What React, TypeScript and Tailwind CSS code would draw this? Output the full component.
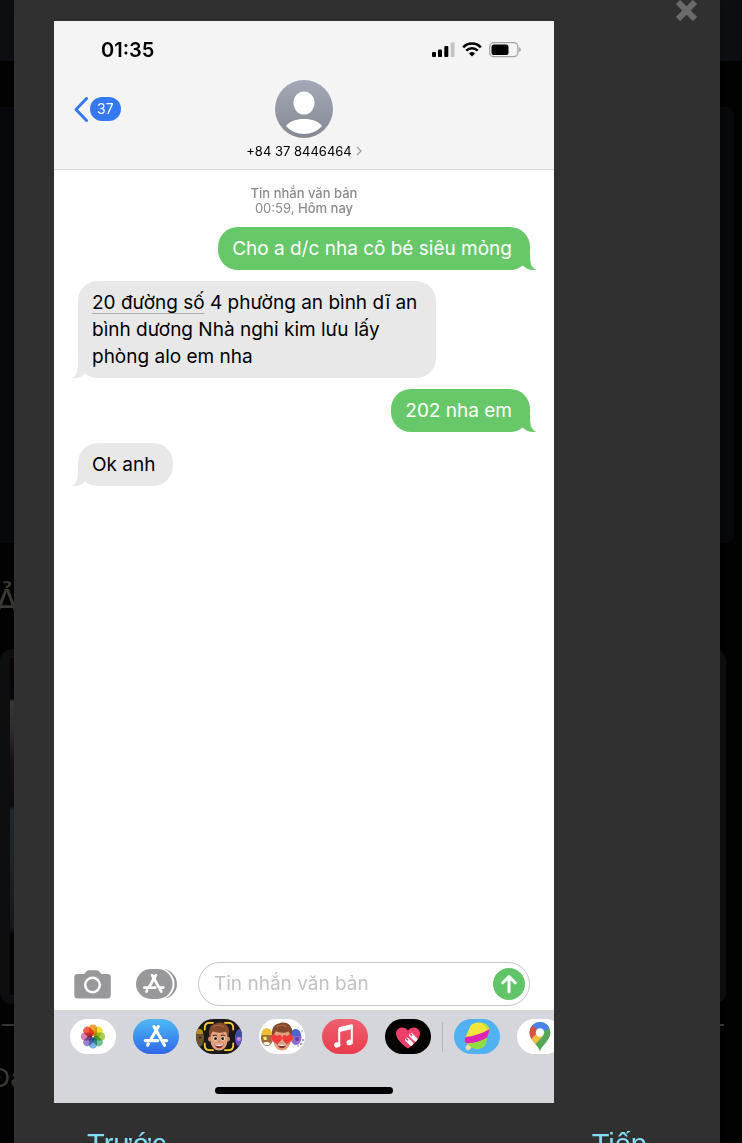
import React from "react";

type Message = {
  id: number;
  mine: boolean;
  link?: string;
  text: string;
};

const messages: Message[] = [
  { id: 1, mine: true, text: "Cho a d/c nha cô bé siêu mỏng" },
  {
    id: 2,
    mine: false,
    link: "20 đường số",
    text: " 4 phường an bình dĩ an bình dương Nhà nghỉ kim lưu lấy phòng alo em nha",
  },
  { id: 3, mine: true, text: "202 nha em" },
  { id: 4, mine: false, text: "Ok anh" },
];

const SignalIcon = () => (
  <svg width="23" height="15" viewBox="0 0 23 15">
    <rect x="0" y="10" width="4" height="5" rx="1" fill="#000" />
    <rect x="6" y="7.5" width="4" height="7.5" rx="1" fill="#000" />
    <rect x="12.3" y="4" width="4" height="11" rx="1" fill="#000" />
    <rect x="18.6" y="0.5" width="4" height="14.5" rx="1" fill="#c4c4c4" />
  </svg>
);

const WifiIcon = () => (
  <svg width="20" height="15" viewBox="0 0 20 15" fill="none" stroke="#000">
    <path d="M1.2 5.3C6 0.3 14 0.3 18.8 5.3" strokeWidth="2.6" />
    <path d="M4.3 8.7C7.5 5.5 12.5 5.5 15.7 8.7" strokeWidth="2.5" />
    <path d="M7 11.4a4.3 4.3 0 0 1 6 0L10 14.6z" fill="#000" stroke="none" />
  </svg>
);

const BatteryIcon = () => (
  <svg width="33" height="16" viewBox="0 0 33 16">
    <rect x="0.7" y="0.7" width="28.2" height="14" rx="4.2" fill="none" stroke="#a3a3a3" strokeWidth="1.3" />
    <rect x="2.5" y="2.5" width="17" height="10.5" rx="2.5" fill="#000" />
    <path d="M30.2 5.3c2.2 0.8 2.2 4 0 4.8z" fill="#a3a3a3" />
  </svg>
);

const AvatarIcon = () => (
  <svg width="58" height="58" viewBox="0 0 58 58">
    <defs>
      <linearGradient id="avatar" x1="0" y1="0" x2="0" y2="1">
        <stop offset="0" stopColor="#a5a9b7" />
        <stop offset="1" stopColor="#858994" />
      </linearGradient>
    </defs>
    <circle cx="29" cy="29" r="29" fill="url(#avatar)" />
    <ellipse cx="29" cy="23" rx="10.5" ry="11.5" fill="#fff" />
    <path d="M11 46C17 36.5 41 36.5 47 46C38 56.5 20 56.5 11 46z" fill="#fff" />
  </svg>
);

const CameraIcon = () => (
  <svg width="37" height="29" viewBox="0 0 37 29">
    <path
      d="M3.5 4H10L12.5 1.3Q13.5 0.3 15 0.3H22.5Q24 0.3 25 1.3L27.5 4H33.5Q36.8 4 36.8 7V25Q36.8 28.5 33.5 28.5H3.5Q0.3 28.5 0.3 25V7Q0.3 4 3.5 4z"
      fill="#98989a"
    />
    <circle cx="18.5" cy="15" r="7.3" fill="none" stroke="#fff" strokeWidth="2.4" />
  </svg>
);

const AppStoreGlyph = () => (
  <g fill="none" stroke="#fff" strokeWidth="3.1" strokeLinecap="round">
    <path d="M10.3 1.6L12.3 5L20.8 20.3" />
    <path d="M14.6 1.6L6.6 15.6" />
    <path d="M4.6 18.8L3.9 20.2" />
    <path d="M1.6 15.6H14" />
    <path d="M19 15.6H23" />
  </g>
);

const AppsIcon = () => (
  <svg width="42" height="30" viewBox="0 0 42 30">
    <rect x="8" y="0" width="33" height="30" rx="15" fill="#98989a" />
    <rect x="4" y="-1" width="34.5" height="32" rx="16" fill="#fff" />
    <rect x="0" y="0" width="36.5" height="30" rx="15" fill="#98989a" />
    <g transform="translate(7 4.8) scale(0.88)">
      <AppStoreGlyph />
    </g>
  </svg>
);

const SendIcon = () => (
  <svg width="32" height="32" viewBox="0 0 32 32">
    <circle cx="16" cy="16" r="16" fill="#61c466" />
    <path
      d="M16 24V9M9.8 14.8L16 8.6L22.2 14.8"
      fill="none"
      stroke="#fff"
      strokeWidth="3"
      strokeLinecap="round"
      strokeLinejoin="round"
    />
  </svg>
);

const petals = [
  { angle: 0, color: "#f5a133" },
  { angle: 45, color: "#ebe03c" },
  { angle: 90, color: "#a8cf50" },
  { angle: 135, color: "#6fc096" },
  { angle: 180, color: "#78b4e6" },
  { angle: 225, color: "#9a83cc" },
  { angle: 270, color: "#d387b4" },
  { angle: 315, color: "#f0604e" },
];

const PhotosIcon = () => (
  <svg width="46" height="35" viewBox="0 0 46 35">
    {petals.map((petal) => (
      <rect
        key={petal.angle}
        x="19"
        y="5.4"
        width="8"
        height="11.4"
        rx="4"
        fill={petal.color}
        className="mix-blend-multiply"
        transform={`rotate(${petal.angle} 23 17.5)`}
      />
    ))}
  </svg>
);

const StoreIcon = () => (
  <svg width="46" height="35" viewBox="0 0 46 35">
    <g transform="translate(10.7 6)">
      <AppStoreGlyph />
    </g>
  </svg>
);

const BoyFace = ({ hearts = false }: { hearts?: boolean }) => (
  <g>
    <ellipse cx="13.8" cy="20" rx="1.8" ry="2.6" fill="#c98762" />
    <ellipse cx="32.2" cy="20" rx="1.8" ry="2.6" fill="#c98762" />
    <path d="M14.5 13Q23 8 31.5 13V21C31.5 27 28 31.5 23 31.5S14.5 27 14.5 21z" fill="#e0a17c" />
    <path
      d="M13.5 18C12 11 14 5.5 20 4.5C23 2.5 30 3.5 32 8C34 11 33 15 32.3 18C31 16 30.5 13.5 29.5 12.5C25 14.5 20 13.5 17 12.3C15.5 14 14.8 16 13.5 18z"
      fill="#82492c"
    />
    <path d="M17 8.5C20 5.5 25 5.5 28 8" fill="none" stroke="#a9653f" strokeWidth="1.3" />
    {hearts ? (
      <g fill="#f03b3b">
        <path d="M18 25C12.5 22.3 11 18.5 13 16.3C15 14.6 17.3 15.6 18.3 17.3C19.5 15.2 22.5 15.5 23 18C23.2 21 20.5 23.5 18 25z" />
        <path d="M28.3 25C25.5 23.5 23 21 23.3 18C23.8 15.5 26.7 15.2 27.8 17.3C28.9 15.6 31.3 14.6 33.2 16.3C35 18.5 33.5 22.3 28.3 25z" />
      </g>
    ) : (
      <g>
        <path d="M17 16.8Q19 15.5 21 16.8M25 16.8Q27 15.5 29 16.8" fill="none" stroke="#6b3a22" strokeWidth="1.1" />
        <circle cx="19.3" cy="19.5" r="1.9" fill="#fff" />
        <circle cx="26.9" cy="19.5" r="1.9" fill="#fff" />
        <circle cx="19.5" cy="19.5" r="1.5" fill="#33211a" />
        <circle cx="26.7" cy="19.5" r="1.5" fill="#33211a" />
        <path d="M22 22.2Q23 23 24 22.2" fill="none" stroke="#b8704e" strokeWidth="1" />
      </g>
    )}
    <path d="M18.3 24.8Q23 26 27.7 24.8Q26.5 29.3 23 29.3T18.3 24.8z" fill="#8c2f2b" />
    <path d="M18.9 24.9Q23 26 27.1 24.9L26.5 26.6Q23 27.3 19.5 26.6z" fill="#fff" />
  </g>
);

const MemojiIcon = () => (
  <svg width="46" height="35" viewBox="0 0 46 35">
    <ellipse cx="3" cy="19" rx="5" ry="9" fill="#6e5230" />
    <path d="M-1 13Q3 7 7 12L7 15H-1z" fill="#b98b20" />
    <circle cx="4" cy="18.5" r="1" fill="#221a12" />
    <ellipse cx="44" cy="19" rx="5" ry="9" fill="#6a55c8" />
    <path d="M40 14Q44 8 48 14V18H40z" fill="#3d50a8" />
    <circle cx="43" cy="20" r="2" fill="#c48bd8" />
    <BoyFace />
    <g fill="none" stroke="#fbd034" strokeWidth="1.8" strokeLinecap="round">
      <path d="M8.8 10.5V8.5Q8.8 3.8 13.5 3.8H17" />
      <path d="M29 3.8H32.5Q37.2 3.8 37.2 8.5V10.5" />
      <path d="M8.8 24.5V26.5Q8.8 31.2 13.5 31.2H17" />
      <path d="M29 31.2H32.5Q37.2 31.2 37.2 26.5V24.5" />
    </g>
  </svg>
);

const StickersIcon = () => (
  <svg width="46" height="35" viewBox="0 0 46 35">
    <ellipse cx="8" cy="19" rx="6" ry="8" fill="#a06c38" />
    <path d="M2.5 16C2 11 6 8.5 9 9.5C12 10 13.5 13 13 16z" fill="#efbd35" />
    <path d="M4 18.5L6 17.5L8 18.5L7.5 21H5z" fill="#ffe56b" />
    <path d="M4 24Q8 22 11 24L10 26H6z" fill="#fff" />
    <ellipse cx="37" cy="18.5" rx="5.5" ry="7.5" fill="#8f6bd0" />
    <path d="M32 14C33 9 40 8.5 41.5 14L42 17H33z" fill="#4a68cc" />
    <circle cx="38" cy="20" r="2" fill="#6a3aa0" />
    <g fill="#7b6ae6">
      <circle cx="43" cy="12" r="0.7" />
      <circle cx="44" cy="21" r="0.9" />
      <circle cx="42" cy="25" r="1" />
      <circle cx="39" cy="27" r="0.8" />
    </g>
    <BoyFace hearts />
  </svg>
);

const MusicIcon = () => (
  <svg width="46" height="35" viewBox="0 0 46 35">
    <path
      d="M17.2 9.2L29.8 6.2V22.5M17.2 9.2V25"
      fill="none"
      stroke="#fff"
      strokeWidth="2"
      strokeLinejoin="round"
    />
    <path d="M17.2 8.5L30.3 5.6V10L17.2 13z" fill="#fff" />
    <ellipse cx="15.3" cy="25.8" rx="3.2" ry="2.7" fill="#fff" transform="rotate(-18 15.3 25.8)" />
    <ellipse cx="27.7" cy="23.4" rx="3.2" ry="2.7" fill="#fff" transform="rotate(-18 27.7 23.4)" />
  </svg>
);

const TouchIcon = () => (
  <svg width="46" height="35" viewBox="0 0 46 35">
    <defs>
      <clipPath id="heart">
        <path d="M23 29.5C17 25.5 10.8 20 11 14C11.5 8 19.5 6.5 23 11.5C26.5 6.5 34.5 8 35 14C35.2 20 29 25.5 23 29.5z" />
      </clipPath>
    </defs>
    <g clipPath="url(#heart)">
      <rect width="46" height="35" fill="#ee3f6b" />
      <g stroke="#fff" strokeWidth="4" strokeLinecap="round">
        <path d="M22 20.5L26.5 25" />
        <path d="M26 16L30.5 20.5" />
      </g>
      <path d="M21.2 19.5l1.4 1.4M25.2 15l1.4 1.4" stroke="#ee3f6b" strokeWidth="1.5" strokeLinecap="round" />
    </g>
  </svg>
);

const PopsicleIcon = () => (
  <svg width="46" height="35" viewBox="0 0 46 35">
    <defs>
      <clipPath id="pop">
        <path d="M11 19.5L16 8C17.5 4 25 2.5 30 4.5C34 6 36.5 9.500 35 13L31 26C29 30 21 31 17 28L11.5 23.5Q10 22 11 19.5z" />
      </clipPath>
    </defs>
    <path d="M17 25L14 28.8" stroke="#f6dba8" strokeWidth="5" strokeLinecap="round" />
    <g clipPath="url(#pop)">
      <rect width="46" height="35" fill="#f2e63a" />
      <path d="M8 18.5Q25 17 37 9V17Q28 24 8 25z" fill="#dd24b4" />
      <path d="M13 25Q27 24 38 15V34H13z" fill="#8fdc3d" />
      <path d="M26 2Q31 6 33 11L38 7L32 1z" fill="#b9e33c" />
    </g>
  </svg>
);

const MapsIcon = () => (
  <svg width="46" height="35" viewBox="0 0 46 35">
    <defs>
      <clipPath id="pin">
        <path d="M23 32.5C22 27 12.5 21.5 12.5 13.5A10.5 10.5 0 0 1 33.5 13.5C33.5 21.5 24 27 23 32.5z" />
      </clipPath>
    </defs>
    <g clipPath="url(#pin)">
      <rect width="46" height="35" fill="#57a75a" />
      <path d="M15 2H26L33 8L23 15L13 6z" fill="#4a82ee" />
      <path d="M11 20.5L21 9.5L26 17L16 28z" fill="#f3bd42" />
      <path d="M10 17L8 8L15 6.5L22 12L13.5 21z" fill="#d95140" />
    </g>
    <circle cx="23" cy="13.5" r="4.2" fill="#fff" />
  </svg>
);

const pill = "flex h-[35px] w-[46px] shrink-0 items-center justify-center overflow-hidden rounded-full";

const Bubble = ({ message }: { message: Message }) => (
  <div
    className={
      message.mine
        ? "relative max-w-[358px] self-end rounded-[20px] bg-[#67c86a] py-2 pr-[18px] pl-[14px] text-white"
        : "relative max-w-[358px] self-start rounded-[20px] bg-[#e8e8e9] py-2 pr-[18px] pl-[14px] text-black"
    }
  >
    <p className="text-[19px] leading-[27px]">
      {message.link && (
        <a href="#address" className="underline decoration-[#aeaeb0] decoration-1 underline-offset-4">
          {message.link}
        </a>
      )}
      {message.text}
    </p>
    <svg
      width="20"
      height="18"
      viewBox="0 0 20 18"
      className={message.mine ? "absolute -right-1.5 bottom-0" : "absolute -left-1.5 bottom-0 -scale-x-100"}
    >
      <path
        d="M14 0C14 9 14 15 20 17.7C15 18.6 10.5 17 7.5 14L2 8z"
        fill={message.mine ? "#67c86a" : "#e8e8e9"}
      />
    </svg>
  </div>
);

const PhoneHeader = () => (
  <header className="border-b border-[#dcdcdd] bg-[#f4f4f4]">
    <div className="mb-0.5 flex h-[57px] items-center justify-between pr-8 pl-[47px]">
      <time className="text-xl font-semibold text-black">01:35</time>
      <div className="flex items-center gap-[7px]">
        <SignalIcon />
        <WifiIcon />
        <BatteryIcon />
      </div>
    </div>
    <div className="grid grid-cols-[1fr_auto_1fr] pb-[10px]">
      <button type="button" className="flex h-[58px] items-center gap-0.5 pl-5">
        <svg width="14" height="25" viewBox="0 0 14 25" fill="none">
          <path d="M12.5 1.5L2 12.5L12.5 23.5" stroke="#3478f2" strokeWidth="3" strokeLinecap="round" strokeLinejoin="round" />
        </svg>
        <span className="rounded-full bg-[#3478f2] px-[7px] text-sm leading-6 text-white">37</span>
      </button>
      <button type="button" className="flex flex-col items-center gap-[5px]">
        <AvatarIcon />
        <span className="flex items-center gap-1 text-[13px] leading-4 text-black">
          +84 37 8446464
          <svg width="6" height="10" viewBox="0 0 6 10" fill="none">
            <path d="M1 0.8L5 5L1 9.2" stroke="#9a9a9c" strokeWidth="1.2" />
          </svg>
        </span>
      </button>
    </div>
  </header>
);

const AppTray = () => (
  <footer className="flex flex-col items-center bg-[#d5d6db] py-[9px]">
    <div className="flex w-full gap-[17px] overflow-hidden pl-4">
      <button type="button" aria-label="Ảnh" className={`${pill} bg-white`}>
        <PhotosIcon />
      </button>
      <button type="button" aria-label="App Store" className={`${pill} bg-linear-to-b from-[#52b8f4] to-[#3067e8]`}>
        <StoreIcon />
      </button>
      <button type="button" aria-label="Memoji" className={`${pill} bg-[#1b1918]`}>
        <MemojiIcon />
      </button>
      <button type="button" aria-label="Nhãn dán" className={`${pill} bg-white`}>
        <StickersIcon />
      </button>
      <button type="button" aria-label="Nhạc" className={`${pill} bg-linear-to-b from-[#ee5f70] to-[#e93b4c]`}>
        <MusicIcon />
      </button>
      <button type="button" aria-label="Digital Touch" className={`${pill} bg-black`}>
        <TouchIcon />
      </button>
      <div className="flex gap-[11px]">
        <span className="-ml-1.5 h-[30px] w-px self-center bg-[#b5b6bb]" />
        <button type="button" aria-label="Trò chơi" className={`${pill} bg-[#50b2f2]`}>
          <PopsicleIcon />
        </button>
      </div>
      <button type="button" aria-label="Bản đồ" className={`${pill} bg-white`}>
        <MapsIcon />
      </button>
    </div>
    <span className="mt-[33px] h-[7px] w-[178px] rounded-full bg-black" />
  </footer>
);

const Phone = () => (
  <section className="flex aspect-[250/541] w-full max-w-[500px] flex-col overflow-hidden bg-white font-['Inter',sans-serif]">
    <PhoneHeader />
    <div className="flex flex-1 flex-col gap-[11px] px-6 pt-4">
      <p className="text-center text-[13px] leading-[15px] text-[#8b8b8d]">
        <span className="font-medium">Tin nhắn văn bản</span>
        <br />
        00:59, <span className="font-medium">Hôm nay</span>
      </p>
      {messages.map((message) => (
        <Bubble key={message.id} message={message} />
      ))}
    </div>
    <form className="flex items-center pr-6 pb-1 pl-5" onSubmit={(e) => e.preventDefault()}>
      <button type="button" aria-label="Máy ảnh">
        <CameraIcon />
      </button>
      <button type="button" aria-label="Ứng dụng" className="ml-[25px]">
        <AppsIcon />
      </button>
      <div className="ml-5 flex h-11 min-w-0 flex-1 items-center rounded-full border border-[#c6c6c8] pr-1 pl-[15px]">
        <input
          type="text"
          aria-label="Tin nhắn văn bản"
          placeholder="Tin nhắn văn bản"
          className="min-w-0 flex-1 text-[19px] text-black outline-none placeholder:text-[#c2c2c4]"
        />
        <button type="submit" aria-label="Gửi">
          <SendIcon />
        </button>
      </div>
    </form>
    <AppTray />
  </section>
);

const Backdrop = () => (
  <div className="font-['Liberation_Sans',sans-serif] text-[#3a3931]">
    <div className="h-[61px] bg-[#0c0e11]" />
    <div className="mt-[46px] mr-2 h-[436px] rounded-r-lg bg-[#07080b]" />
    <h2 className="mt-[35px] -ml-1.5 h-[71px] text-[38px] leading-[50px]">ẢNH</h2>
    <div className="mr-4 h-[355px] rounded-xl bg-[#0c0e10] py-[9px] pl-2.5">
      <div className="h-full w-1/2 bg-[linear-gradient(#0a0406,#08080a_12%,#3a3a3a_13%,#2e2c2e_22%,#1c1118_30%,#0c0c12_44%,#1c2a31_45%,#1c262c_60%,#17171c_80%,#050303_82%,#050303)]" />
    </div>
    <div className="mt-5 mr-[18px] ml-0.5 h-0.5 bg-[#363636]" />
    <h2 className="mt-[34px] -ml-2.5 text-[28px] leading-9">Đánh giá</h2>
  </div>
);

export default function App() {
  return (
    <main className="relative h-screen overflow-hidden bg-[#020202]">
      <Backdrop />
      <div
        role="dialog"
        aria-label="Xem ảnh"
        className="absolute inset-y-0 right-[22px] left-[14px] overflow-hidden bg-[#303030] shadow-md"
      >
        <div className="flex h-[21px] justify-end pr-[23px]">
          <button type="button" aria-label="Đóng">
            <svg width="21" height="21" viewBox="0 0 21 21">
              <path d="M2 2L19 19M19 2L2 19" stroke="#6a6a6a" strokeWidth="6" />
            </svg>
          </button>
        </div>
        <div className="px-10">
          <Phone />
        </div>
        <nav className="flex justify-between px-[73px] pt-[23px] font-['Liberation_Sans',sans-serif] text-[29px] leading-9 text-[#86dcf5]">
          <a href="#prev">Trước</a>
          <a href="#next">Tiếp</a>
        </nav>
      </div>
    </main>
  );
}
